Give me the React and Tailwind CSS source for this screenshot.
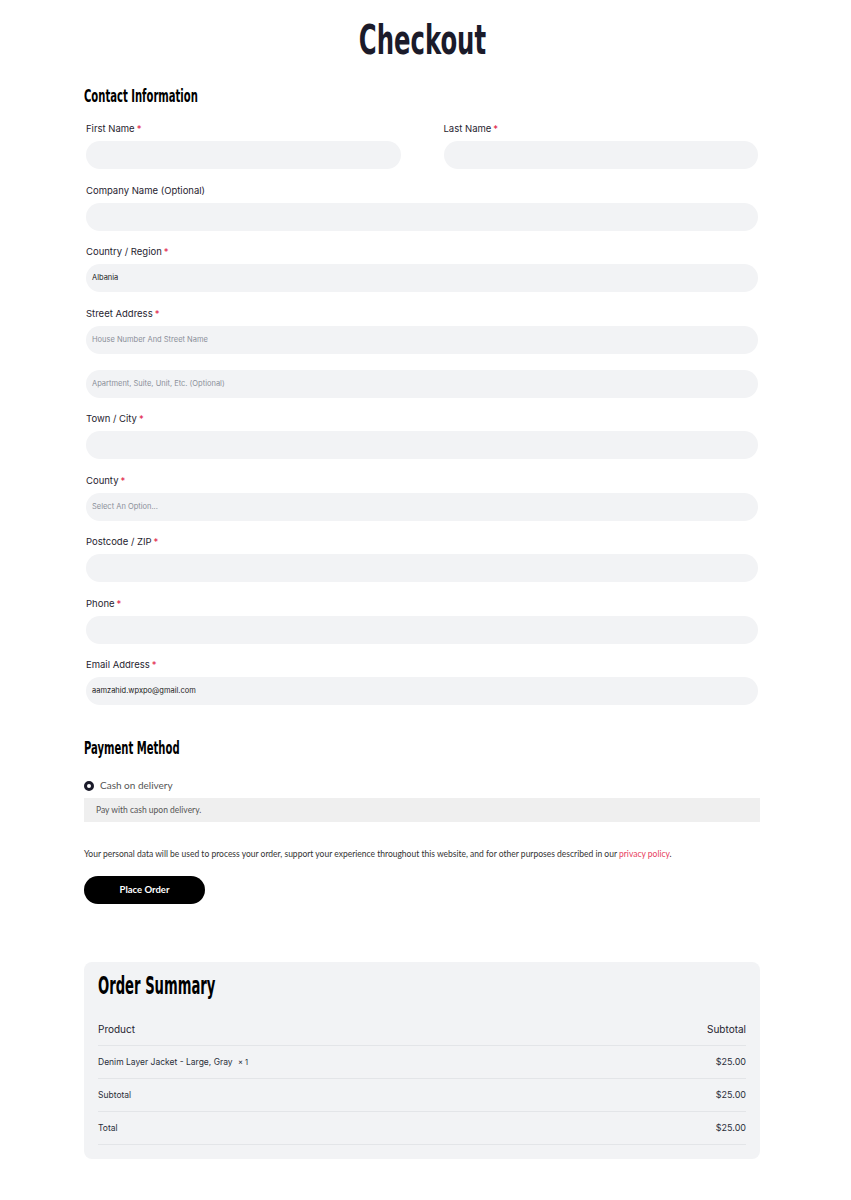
import React from 'react';

const heading = { fontFamily: '"DejaVu Sans Condensed", "Liberation Sans", sans-serif' };

const Req = () => <span className="text-[#e11d48] ml-[2px]">*</span>;

const Field = ({ label, required, value, placeholder, className = 'mb-[15.5px]' }) => (
  <div className={className}>
    {label && (
      <div className="text-[9.5px] leading-[12px] text-[#1f2430] mb-[6px] px-[2px]">
        {label}
        {required && <Req />}
      </div>
    )}
    <div className="h-[28px] mx-[2px] rounded-full bg-[#f2f3f5] flex items-center px-[6px] text-[7.5px]">
      {value ? (
        <span className="text-[#222]">{value}</span>
      ) : placeholder ? (
        <span className="text-[#8a8f99]">{placeholder}</span>
      ) : null}
    </div>
  </div>
);

const SummaryRow = ({ left, right, bold }) => (
  <div className="flex justify-between items-center h-[33px] border-b border-[#e3e5e8]">
    <span className={bold ? 'text-[10px] text-[#1f2430]' : 'text-[8.5px] text-[#2a2f3a]'}>{left}</span>
    <span className={bold ? 'text-[10px] text-[#1f2430]' : 'text-[9px] text-[#2a2f3a]'}>{right}</span>
  </div>
);

const SectionTitle = ({ children, className }) => (
  <h2 className={`text-[18px] leading-[20px] font-bold text-black ${className}`} style={heading}>
    <span className="inline-block scale-x-[0.62] origin-left whitespace-nowrap">{children}</span>
  </h2>
);

export default function App() {
  return (
    <div className="w-full bg-white text-[#1f2430]" style={{ fontFamily: 'Inter, "Noto Sans", sans-serif' }}>
      <div className="w-[676px] ml-[84px] pt-[18px] pb-[43px]">
        <h1 className="text-center text-[41px] leading-[44px] font-bold text-[#1b1b2a]" style={heading}>
          <span className="inline-block scale-x-[0.66] origin-center">Checkout</span>
        </h1>

        <SectionTitle className="mt-[24px]">Contact Information</SectionTitle>

        <div className="mt-[17px]">
          <div className="grid grid-cols-2 gap-x-[39px]">
            <Field label="First Name" required />
            <Field label="Last Name" required />
          </div>
          <Field label="Company Name (Optional)" />
          <Field label="Country / Region" required value="Albania" />
          <Field label="Street Address" required placeholder="House Number And Street Name" className="mb-[16px]" />
          <Field placeholder="Apartment, Suite, Unit, Etc. (Optional)" />
          <Field label="Town / City" required />
          <Field label="County" required placeholder="Select An Option..." />
          <Field label="Postcode / ZIP" required />
          <Field label="Phone" required />
          <Field label="Email Address" required value="aamzahid.wpxpo@gmail.com" />
        </div>

        <SectionTitle className="mt-[33px]">Payment Method</SectionTitle>

        <div style={{ fontFamily: 'Lato, "Open Sans", sans-serif' }}>
          <div className="mt-[20px] flex items-center gap-[6px]">
            <span className="w-[10px] h-[10px] rounded-full border-[3px] border-[#1b1b2a] bg-white" />
            <span className="text-[10px] text-[#555]">Cash on delivery</span>
          </div>
          <div className="mt-[5px] h-[24px] bg-[#efefef] flex items-center px-[12px] text-[8.5px] text-[#555]">
            Pay with cash upon delivery.
          </div>

          <p className="mt-[26px] text-[8.5px] leading-[12px] text-[#333]">
            Your personal data will be used to process your order, support your experience throughout this website, and for other purposes described in our{' '}
            <span className="text-[#e8405e]">privacy policy</span>.
          </p>

          <button className="mt-[16px] w-[121px] h-[28px] rounded-full bg-black text-white text-[9.5px] font-bold">
            Place Order
          </button>
        </div>

        <div className="mt-[58px] rounded-[8px] bg-[#f2f3f5] px-[14px] pt-[9px] pb-[14px]">
          <h2 className="text-[24px] leading-[30px] font-bold text-black" style={heading}>
            <span className="inline-block scale-x-[0.61] origin-left whitespace-nowrap">Order Summary</span>
          </h2>
          <div className="mt-[12px]">
            <SummaryRow bold left="Product" right="Subtotal" />
            <SummaryRow
              left={
                <span>
                  Denim Layer Jacket - Large, Gray <span className="ml-[3px] text-[7.5px]">× 1</span>
                </span>
              }
              right="$25.00"
            />
            <SummaryRow left="Subtotal" right="$25.00" />
            <SummaryRow left="Total" right="$25.00" />
          </div>
        </div>
      </div>
    </div>
  );
}
